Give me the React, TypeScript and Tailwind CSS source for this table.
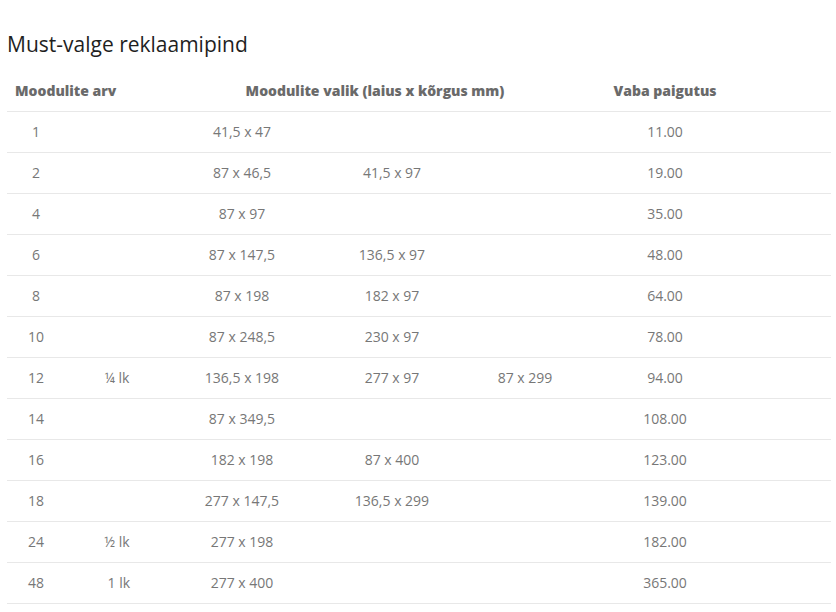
import React from "react";

const rows: [string, string, string, string, string, string][] = [
  ["1", "", "41,5 x 47", "", "", "11.00"],
  ["2", "", "87 x 46,5", "41,5 x 97", "", "19.00"],
  ["4", "", "87 x 97", "", "", "35.00"],
  ["6", "", "87 x 147,5", "136,5 x 97", "", "48.00"],
  ["8", "", "87 x 198", "182 x 97", "", "64.00"],
  ["10", "", "87 x 248,5", "230 x 97", "", "78.00"],
  ["12", "¼ lk", "136,5 x 198", "277 x 97", "87 x 299", "94.00"],
  ["14", "", "87 x 349,5", "", "", "108.00"],
  ["16", "", "182 x 198", "87 x 400", "", "123.00"],
  ["18", "", "277 x 147,5", "136,5 x 299", "", "139.00"],
  ["24", "½ lk", "277 x 198", "", "", "182.00"],
  ["48", "\u00a01 lk", "277 x 400", "", "", "365.00"],
];

const grid =
  "grid grid-cols-[58px_104px_146px_154px_112px_168px_82px] items-center";

export default function App() {
  return (
    <div
      className="min-h-[612px] w-[836px] bg-white pl-[7px] pr-[5px]"
      style={{ fontFamily: '"Open Sans", "Noto Sans", sans-serif' }}
    >
      <h2 className="pt-[30px] text-[21px] leading-[28px] text-[#1f1f1f]">
        Must-valge reklaamipind
      </h2>
      <div className="mt-[13px]">
        <div
          className={`${grid} h-[41px] border-b border-[#e8e8e8] pb-[1px] text-[14px] font-extrabold text-[#6a6a6a]`}
        >
          <div className="col-span-2 pl-[8px]">Moodulite arv</div>
          <div className="col-span-3 text-center">
            Moodulite valik (laius x kõrgus mm)
          </div>
          <div className="text-center">Vaba paigutus</div>
          <div />
        </div>
        {rows.map((r, i) => (
          <div
            key={i}
            className={`${grid} h-[41px] border-b border-[#e8e8e8] pb-[1px] text-[14px] text-[#777777]`}
          >
            {r.map((c, j) => (
              <div key={j} className="text-center whitespace-pre">
                {c}
              </div>
            ))}
            <div />
          </div>
        ))}
      </div>
    </div>
  );
}
